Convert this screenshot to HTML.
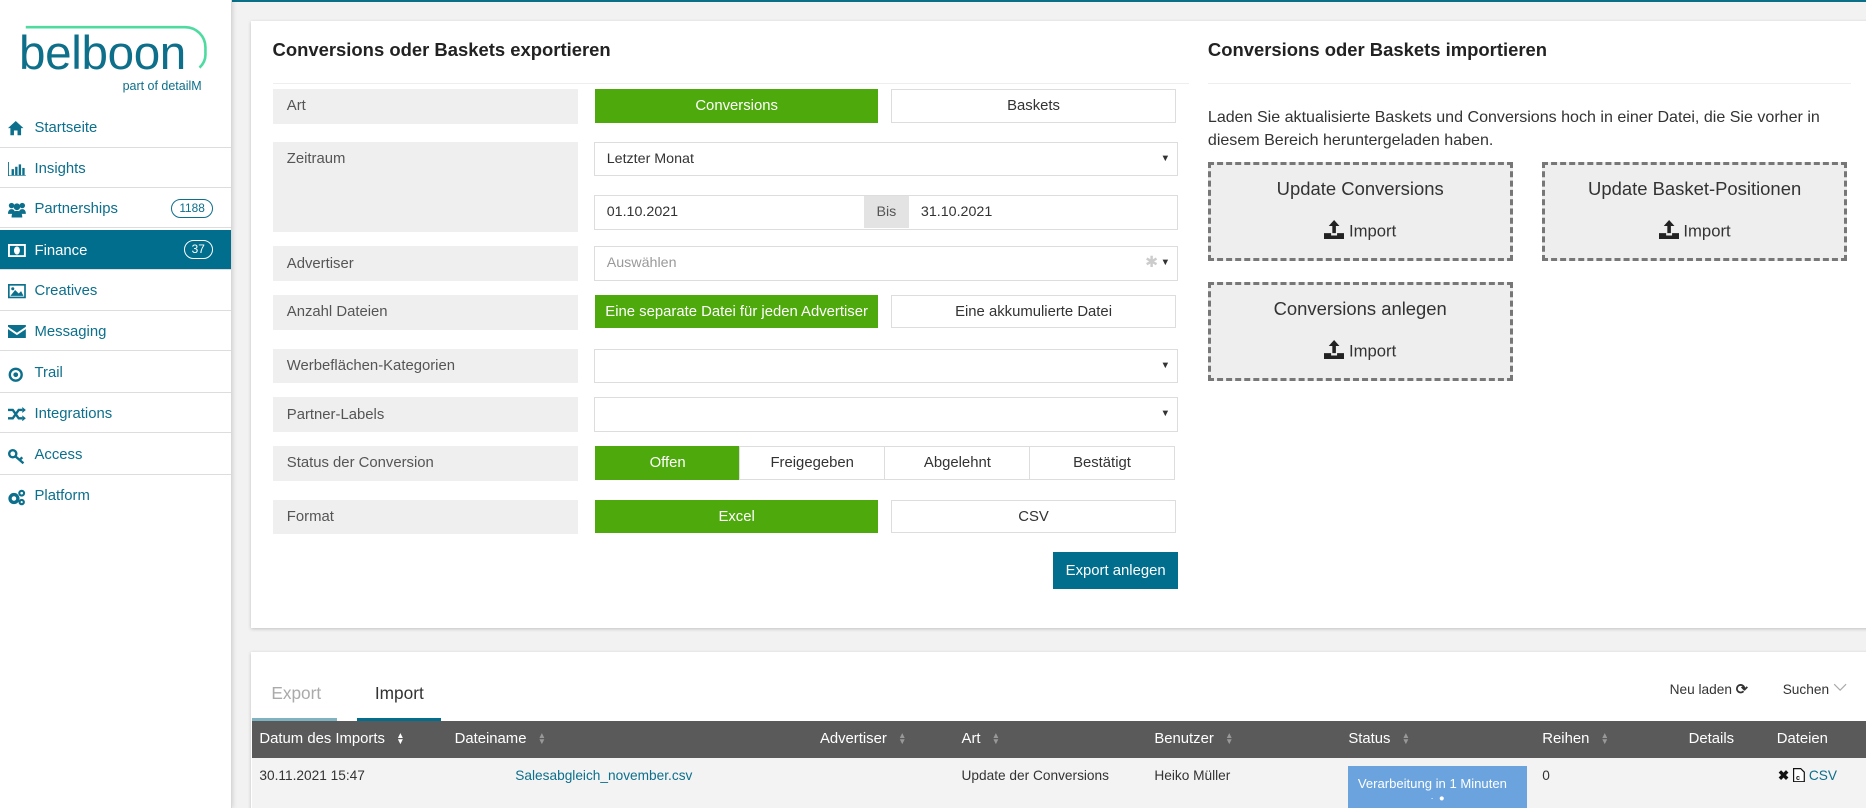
<!DOCTYPE html>
<html><head><meta charset="utf-8">
<style>
*{box-sizing:border-box;margin:0;padding:0}
html,body{width:1866px;height:808px;overflow:hidden;background:#f2f2f2}
#w{zoom:1.19005;width:1568px;height:679px;position:relative;font-family:"Liberation Sans",Arial,sans-serif;color:#333;overflow:hidden}
.a{position:absolute}
#top{left:0;top:0;width:1568px;height:2px;background:#0b6f87}
#side{left:0;top:0;width:195px;height:679px;background:#fff;border-right:1px solid #d8d8d8;box-shadow:1px 0 4px rgba(0,0,0,.15)}
.nav{position:absolute;left:0;width:194px;height:34px;border-bottom:1px solid #ddd;color:#0c6f8c;font-size:12.5px;line-height:36px;padding-left:29px}
.nav svg{position:absolute;left:7px;top:12px}
.nav.act{background:#006e8c;color:#fff}
.badge{position:absolute;right:15px;top:9px;height:16px;border:1px solid currentColor;border-radius:9px;font-size:10px;line-height:14px;padding:0 6px}
.card{background:#fff;box-shadow:0 1px 3px rgba(0,0,0,.2)}
.h{font-size:15.5px;font-weight:bold;color:#222}
.lbl{position:absolute;left:229px;width:257px;background:#efefef;font-size:12.5px;color:#555;padding-left:12px;line-height:28px;padding-top:1px}
.btn{position:absolute;height:28px;line-height:28px;text-align:center;font-size:12.5px;color:#333;background:#fff;border:1px solid #ddd}
.g{background:#4ea90c;border-color:#4ea90c;color:#fff}
.sel{position:absolute;left:499px;width:491px;height:29px;border:1px solid #ddd;background:#fff;font-size:12px;line-height:27px;padding-left:10px}
.sel:after{content:"▼";position:absolute;right:6px;top:0;font-size:8px;color:#333}
.box{position:absolute;width:256px;height:83px;background:#eee;border:3px dashed #777;text-align:center}
.box .t{font-size:15.5px;color:#333;margin-top:11px}
.box .i{font-size:14px;color:#333;margin-top:17px}
.th{position:absolute;top:614px;color:#fff;font-size:12.5px}
.s{display:inline-block;color:#999;font-size:7px;line-height:5px;vertical-align:middle;margin-left:6px}
.td{position:absolute;top:645px;font-size:11.5px;color:#333}
</style></head><body><div id="w">
<div class="a" id="top"></div>
<div class="a" id="side">
 <svg class="a" style="left:18px;top:17px" width="160" height="48" viewBox="0 0 160 48"><path d="M4 6 H138 A17 17 0 0 1 155 23 V28 A15 15 0 0 1 150 40" fill="none" stroke="#4fdba0" stroke-width="2.2"/></svg>
 <div class="a" style="left:16px;top:22px;font-size:40px;color:#0d6f8a;letter-spacing:-0.3px;font-family:'Liberation Sans',sans-serif">belboon</div>
 <div class="a" style="left:103px;top:66px;font-size:10.5px;color:#0d6f8a">part of detailM</div>
 <div class="nav" style="top:90px">
  <svg width="13" height="12" viewBox="0 0 13 12"><path d="M6.5 0 L13 6 H11 V12 H8 V8 H5 V12 H2 V6 H0Z" fill="#0c6f8c"/></svg>Startseite</div>
 <div class="nav" style="top:124px"><svg width="15" height="12" viewBox="0 0 15 12"><path d="M0 0V12H15" stroke="#0c6f8c" fill="none" stroke-width="1.5"/><rect x="3" y="6" width="2" height="5" fill="#0c6f8c"/><rect x="6" y="4" width="2" height="7" fill="#0c6f8c"/><rect x="9" y="2" width="2" height="9" fill="#0c6f8c"/><rect x="12" y="5" width="2" height="6" fill="#0c6f8c"/></svg>Insights</div>
 <div class="nav" style="top:158px"><svg width="15" height="13" viewBox="0 0 15 13"><circle cx="3" cy="3" r="2.3" fill="#0c6f8c"/><circle cx="12" cy="3" r="2.3" fill="#0c6f8c"/><circle cx="7.5" cy="4" r="2.8" fill="#0c6f8c"/><path d="M0 10 Q0 6 3 6 Q6 6 6 10Z M9 10 Q9 6 12 6 Q15 6 15 10Z M3 13 Q3 7.5 7.5 7.5 Q12 7.5 12 13Z" fill="#0c6f8c"/></svg>Partnerships<span class="badge">1188</span></div>
 <div class="nav act" style="top:193px"><svg width="15" height="11" viewBox="0 0 15 11"><rect x="0.8" y="0.8" width="13.4" height="9.4" fill="none" stroke="#fff" stroke-width="1.6"/><ellipse cx="7.5" cy="5.5" rx="2.5" ry="3.4" fill="#fff"/></svg>Finance<span class="badge">37</span></div>
 <div class="nav" style="top:227px"><svg width="15" height="12" viewBox="0 0 15 12"><rect x="0.7" y="0.7" width="13.6" height="10.6" fill="none" stroke="#0c6f8c" stroke-width="1.4"/><path d="M2 10 L6 5 L9 8 L11 6 L13 10Z" fill="#0c6f8c"/><circle cx="4" cy="4" r="1.3" fill="#0c6f8c"/></svg>Creatives</div>
 <div class="nav" style="top:261px"><svg width="15" height="11" viewBox="0 0 15 11"><path d="M0 0H15V1.5L7.5 6.5 0 1.5Z M0 3.5 7.5 8.5 15 3.5V11H0Z" fill="#0c6f8c"/></svg>Messaging</div>
 <div class="nav" style="top:296px"><svg width="13" height="13" viewBox="0 0 13 13"><circle cx="6.5" cy="6.5" r="5" fill="none" stroke="#0c6f8c" stroke-width="2"/><circle cx="6.5" cy="6.5" r="2" fill="#0c6f8c"/></svg>Trail</div>
 <div class="nav" style="top:330px"><svg width="15" height="12" viewBox="0 0 15 12"><path d="M0 2.5H4L9 9.5H12M0 9.5H4L9 2.5H12" fill="none" stroke="#0c6f8c" stroke-width="2"/><path d="M12 0L15 2.5 12 5ZM12 7L15 9.5 12 12Z" fill="#0c6f8c"/></svg>Integrations</div>
 <div class="nav" style="top:365px"><svg width="15" height="13" viewBox="0 0 15 13"><circle cx="4" cy="4" r="3" fill="none" stroke="#0c6f8c" stroke-width="2"/><path d="M6 6L13 12M10 9L12 7" stroke="#0c6f8c" stroke-width="2" fill="none"/></svg>Access</div>
 <div class="nav" style="top:399px;border-bottom:none"><svg width="15" height="14" viewBox="0 0 15 14"><circle cx="5" cy="8" r="3.3" fill="none" stroke="#0c6f8c" stroke-width="2.8"/><circle cx="11.5" cy="3.5" r="2" fill="none" stroke="#0c6f8c" stroke-width="1.8"/><circle cx="11.5" cy="11" r="1.8" fill="none" stroke="#0c6f8c" stroke-width="1.8"/></svg>Platform</div>
</div>

<div class="a card" style="left:211px;top:18px;width:1370px;height:510px"></div>
<div class="a h" style="left:229px;top:33px">Conversions oder Baskets exportieren</div>
<div class="a" style="left:229px;top:70px;width:770px;height:1px;background:#eee"></div>
<div class="a h" style="left:1015px;top:33px">Conversions oder Baskets importieren</div>
<div class="a" style="left:1015px;top:70px;width:540px;height:1px;background:#eee"></div>

<div class="lbl" style="top:75px">Art</div>
<div class="lbl" style="top:119px;height:76px">Zeitraum</div>
<div class="lbl" style="top:207px">Advertiser</div>
<div class="lbl" style="top:248px">Anzahl Dateien</div>
<div class="lbl" style="top:293px">Werbeflächen-Kategorien</div>
<div class="lbl" style="top:334px">Partner-Labels</div>
<div class="lbl" style="top:375px">Status der Conversion</div>
<div class="lbl" style="top:420px">Format</div>

<div class="btn g" style="left:500px;top:75px;width:238px">Conversions</div>
<div class="btn" style="left:749px;top:75px;width:239px">Baskets</div>
<div class="sel" style="top:119px">Letzter Monat</div>
<div class="a" style="left:499px;top:164px;width:491px;height:29px;border:1px solid #ddd;background:#fff;font-size:12px;line-height:27px">
 <span class="a" style="left:10px">01.10.2021</span>
 <span class="a" style="left:226px;top:0;width:38px;height:27px;background:#e3e3e3;color:#555;text-align:center">Bis</span>
 <span class="a" style="left:274px">31.10.2021</span></div>
<div class="sel" style="top:207px;color:#999">Auswählen<span class="a" style="right:16px;top:0;color:#ccc;font-size:13px">✱</span></div>
<div class="btn g" style="left:500px;top:248px;width:238px">Eine separate Datei für jeden Advertiser</div>
<div class="btn" style="left:749px;top:248px;width:239px">Eine akkumulierte Datei</div>
<div class="sel" style="top:293px"></div>
<div class="sel" style="top:334px"></div>
<div class="btn g" style="left:500px;top:375px;width:122px">Offen</div>
<div class="btn" style="left:621px;top:375px;width:123px">Freigegeben</div>
<div class="btn" style="left:743px;top:375px;width:123px">Abgelehnt</div>
<div class="btn" style="left:865px;top:375px;width:122px">Bestätigt</div>
<div class="btn g" style="left:500px;top:420px;width:238px">Excel</div>
<div class="btn" style="left:749px;top:420px;width:239px">CSV</div>
<div class="btn" style="left:885px;top:464px;width:105px;height:31px;line-height:31px;background:#006e8c;border-color:#006e8c;color:#fff">Export anlegen</div>

<div class="a" style="left:1015px;top:89px;width:540px;font-size:13.5px;line-height:19.5px;color:#333">Laden Sie aktualisierte Baskets und Conversions hoch in einer Datei, die Sie vorher in diesem Bereich heruntergeladen haben.</div>
<div class="box" style="left:1015px;top:136px"><div class="t">Update Conversions</div><div class="i"><svg width="17" height="16" viewBox="0 0 17 16" style="vertical-align:-2px"><path d="M8.5 0L13 5H10V11H7V5H4Z M0 11H6V13H11V11H17V16H0Z" fill="#222"/></svg> Import</div></div>
<div class="box" style="left:1296px;top:136px"><div class="t">Update Basket-Positionen</div><div class="i"><svg width="17" height="16" viewBox="0 0 17 16" style="vertical-align:-2px"><path d="M8.5 0L13 5H10V11H7V5H4Z M0 11H6V13H11V11H17V16H0Z" fill="#222"/></svg> Import</div></div>
<div class="box" style="left:1015px;top:237px"><div class="t">Conversions anlegen</div><div class="i"><svg width="17" height="16" viewBox="0 0 17 16" style="vertical-align:-2px"><path d="M8.5 0L13 5H10V11H7V5H4Z M0 11H6V13H11V11H17V16H0Z" fill="#222"/></svg> Import</div></div>

<div class="a card" style="left:211px;top:548px;width:1370px;height:140px"></div>
<div class="a" style="left:228px;top:574px;font-size:14.5px;color:#aaa">Export</div>
<div class="a" style="left:315px;top:574px;font-size:14.5px;color:#333">Import</div>
<div class="a" style="left:212px;top:603px;width:71px;height:4px;background:#7fb3c2"></div>
<div class="a" style="left:300px;top:603px;width:71px;height:4px;background:#006e8c"></div>
<div class="a" style="left:1403px;top:573px;font-size:11.5px;color:#333">Neu laden <b style="font-size:12px">⟳</b></div>
<div class="a" style="left:1498px;top:573px;font-size:11.5px;color:#333">Suchen <svg width="12" height="8" viewBox="0 0 12 8" style="vertical-align:1px"><path d="M1 1L6 6 11 1" fill="none" stroke="#aaa" stroke-width="1"/></svg></div>
<div class="a" style="left:212px;top:606px;width:1356px;height:31px;background:#5a5a5a"></div>
<div class="th" style="left:218px">Datum des Imports <span class="s" style="color:#fff">▲<br>▼</span></div>
<div class="th" style="left:382px">Dateiname <span class="s">▲<br>▼</span></div>
<div class="th" style="left:689px">Advertiser <span class="s">▲<br>▼</span></div>
<div class="th" style="left:808px">Art <span class="s">▲<br>▼</span></div>
<div class="th" style="left:970px">Benutzer <span class="s">▲<br>▼</span></div>
<div class="th" style="left:1133px">Status <span class="s">▲<br>▼</span></div>
<div class="th" style="left:1296px">Reihen <span class="s">▲<br>▼</span></div>
<div class="th" style="left:1419px">Details</div>
<div class="th" style="left:1493px">Dateien</div>
<div class="a" style="left:212px;top:637px;width:1356px;height:42px;background:#f3f3f3"></div>
<div class="td" style="left:218px">30.11.2021 15:47</div>
<div class="td" style="left:433px;color:#0c6f8c">Salesabgleich_november.csv</div>
<div class="td" style="left:808px">Update der Conversions</div>
<div class="td" style="left:970px">Heiko Müller</div>
<div class="a" style="left:1133px;top:644px;width:150px;height:35px;background:#6aa3dd;color:#fff;font-size:11px;padding:8px 0 0 8px">Verarbeitung in 1 Minuten<div style="text-align:center;font-size:8px;margin-top:2px;padding-right:8px">·&nbsp;&nbsp;●</div></div>
<div class="td" style="left:1296px">0</div>
<div class="td" style="left:1494px;color:#111"><b>✖</b> <svg width="10" height="12" viewBox="0 0 10 12" style="vertical-align:-2px"><path d="M0.5 0.5H6.5L9.5 3.5V11.5H0.5Z" fill="#fff" stroke="#111"/><text x="2.5" y="10" font-size="6" font-family="Liberation Sans" font-weight="bold" fill="#111">c</text></svg> <span style="color:#0c6f8c">CSV</span></div>
</div></body></html>
